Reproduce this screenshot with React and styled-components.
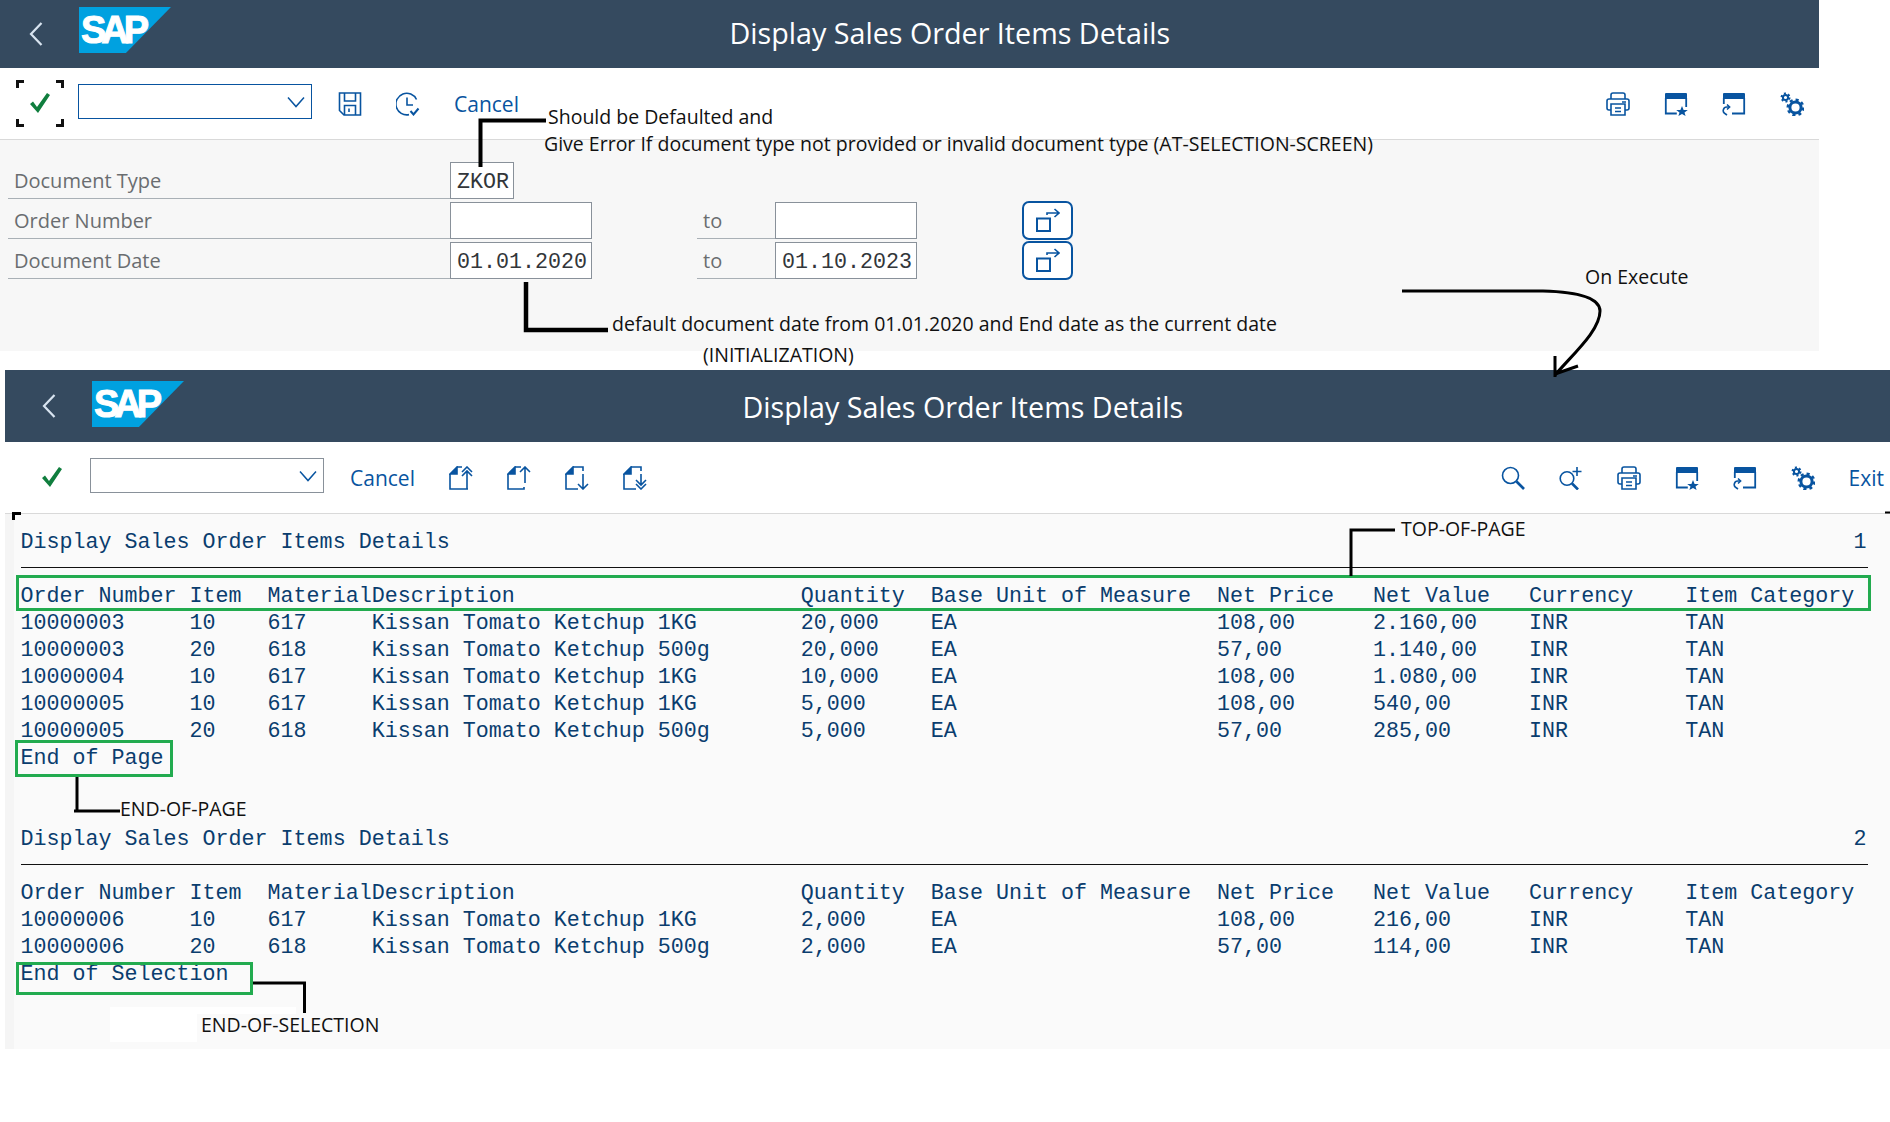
import React from 'react';
import styled, { createGlobalStyle } from 'styled-components';

const GlobalStyle = createGlobalStyle`
  html, body {
    margin: 0;
    padding: 0;
    background: #fff;
    font-family: "Open Sans", "Noto Sans", sans-serif;
  }
`;

const BLUE = '#0854a0';
const MONO = '"Liberation Mono", monospace';

const Page = styled.div`
  position: relative;
  width: 1890px;
  height: 1122px;
  overflow: hidden;
  background: #fff;
`;

const Screen = styled.section`
  width: ${(p) => p.$width}px;
  margin: ${(p) => p.$margin};
  display: flex;
  flex-direction: column;
`;

const ShellBar = styled.header`
  height: ${(p) => p.$height}px;
  background: #354a5f;
  display: flex;
  align-items: center;
  padding-left: ${(p) => p.$inset}px;
`;

const Logo = styled.div`
  align-self: flex-start;
  margin: ${(p) => p.$top}px 0 0 36px;
  width: 92px;
  height: 46px;
  background: #00a1e0;
  clip-path: polygon(0 0, 100% 0, 51% 100%, 0 100%);
  color: #fff;
  font: 700 38px/46px "Liberation Sans", sans-serif;
  letter-spacing: -5px;
  -webkit-text-stroke: 1px #fff;
  padding-left: 2px;
  box-sizing: border-box;
`;

const Title = styled.h1`
  margin: 0 0 ${(p) => p.$lift}px 558.5px;
  color: #fff;
  font-size: 28.7px;
  font-weight: 400;
  white-space: nowrap;
`;

const Toolbar = styled.div`
  height: 71px;
  border-bottom: 1px solid #d9d9d9;
  background: #fff;
  display: flex;
  align-items: center;
  padding: 0 ${(p) => p.$right}px 0 ${(p) => p.$left}px;
`;

const Dropdown = styled.div`
  width: 234px;
  height: 35px;
  margin: -4px 0 0 14px;
  box-sizing: border-box;
  background: #fff;
  border: 1.5px solid ${(p) => (p.$active ? BLUE : '#89919a')};
  display: flex;
  align-items: center;
  justify-content: flex-end;
  padding-right: 6px;
`;

const IconButton = styled.div`
  width: 58px;
  height: 36px;
  display: flex;
  align-items: center;
  justify-content: center;
  flex: none;
`;

const IconGroup = styled.div`
  display: flex;
  align-items: center;
  margin: 0 ${(p) => p.$after || 0}px 0 ${(p) => p.$before || 0}px;
`;

const TextAction = styled.span`
  margin-left: ${(p) => p.$gap}px;
  color: ${BLUE};
  font-size: 21px;
  white-space: nowrap;
`;

const Spacer = styled.div`
  flex: 1;
`;

const FormArea = styled.div`
  height: 211px;
  box-sizing: border-box;
  background: #f7f7f7;
  padding: 22px 0 0 8px;
  display: flex;
  flex-direction: column;
  gap: 3.5px;
`;

const FormRow = styled.div`
  display: flex;
  align-items: stretch;
  height: 36.5px;
`;

const Label = styled.div`
  width: ${(p) => p.$width}px;
  margin-left: ${(p) => p.$gap || 0}px;
  padding: 2px 0 0 ${(p) => p.$inset}px;
  box-sizing: border-box;
  border-bottom: 1px solid #a9b0b6;
  display: flex;
  align-items: center;
  color: #6a6d70;
  font-size: 20px;
`;

const Field = styled.div`
  width: ${(p) => p.$width}px;
  box-sizing: border-box;
  background: #fff;
  border: 1px solid #89919a;
  padding: 5px 0 0 6px;
  display: flex;
  align-items: center;
  color: #32363a;
  font: 21.68px ${MONO};
`;

const RangeButton = styled.div`
  width: 51px;
  height: 38.5px;
  margin: -1px 0 0 105px;
  box-sizing: border-box;
  background: #fff;
  border: 2px solid ${BLUE};
  border-radius: 7px;
  display: flex;
  align-items: center;
  justify-content: center;
`;

const ListArea = styled.div`
  height: 535px;
  box-sizing: border-box;
  background: #fafafa;
  border-left: 9px solid #f5f5f5;
  padding: 14.5px 0 0 6.5px;
`;

const ListLine = styled.div`
  height: 27px;
  color: #0a3d6e;
  font: 21.68px/27px ${MONO};
  white-space: pre;
`;

const ListTitle = styled(ListLine)`
  width: 1846px;
  display: flex;
  justify-content: space-between;
`;

const ListRule = styled.div`
  height: 27px;
  width: 1847px;
  box-sizing: border-box;
  padding-top: 11px;
  &::before {
    content: '';
    display: block;
    height: 1px;
    background: #111;
  }
`;

/* everything below lies over the screenshots: the hand-made annotations */
const Note = styled.span`
  position: absolute;
  left: ${(p) => p.$x}px;
  top: ${(p) => p.$y - 1}px;
  transform: translateY(-50%);
  color: #111;
  font-size: 19.5px;
  white-space: nowrap;
`;

const GreenBox = styled.div`
  position: absolute;
  left: ${(p) => p.$x}px;
  top: ${(p) => p.$y}px;
  width: ${(p) => p.$w}px;
  height: ${(p) => p.$h}px;
  box-sizing: border-box;
  border: 3px solid #22ab4f;
`;

const Patch = styled.div`
  position: absolute;
  left: ${(p) => p.$x}px;
  top: ${(p) => p.$y}px;
  width: ${(p) => p.$w}px;
  height: ${(p) => p.$h}px;
  background: #fff;
`;

const Strokes = styled.svg`
  position: absolute;
  left: 0;
  top: 0;
  pointer-events: none;
`;

const Icon = ({ children, w = 24, h = 24, sw = 1.6 }) => (
  <svg width={w} height={h} viewBox={`0 0 ${w} ${h}`} fill="none" stroke={BLUE} strokeWidth={sw}>
    {children}
  </svg>
);

const BackIcon = () => (
  <svg width="14" height="24" viewBox="0 0 14 24" fill="none" stroke="#d8e4f0" strokeWidth="2.2">
    <path d="M12.5 1L2 12l10.5 11" />
  </svg>
);

const CheckIcon = ({ focus }) => (
  <svg width="48" height="47" viewBox="0 0 48 47" style={{ flex: 'none' }}>
    {focus && (
      <path
        d="M1.5 8V1.5H8M40 1.5h6.5V8M1.5 39v6.5H8M40 45.5h6.5V39"
        fill="none"
        stroke="#111"
        strokeWidth="3"
      />
    )}
    <polygon points="14,24 17,21.5 21,27 31,13 34,15 22,33" fill="#107e3e" />
  </svg>
);

const Chevron = () => (
  <svg width="18" height="12" viewBox="0 0 18 12" fill="none" stroke={BLUE} strokeWidth="1.5">
    <path d="M1 1.5l8 9 8-9" />
  </svg>
);

const SaveIcon = () => (
  <Icon>
    <path d="M1.5 1h21v22H6l-4.5-4.5z" />
    <path d="M6.5 1v8h11V1M6.5 23v-9.5h11V23M11 16.5v3.5" />
  </Icon>
);

const ClockIcon = () => (
  <Icon>
    <path d="M20.5 7.5A10.8 10.8 0 1 0 13 22.6" />
    <path d="M11 5.5v7.5h6" />
    <path d="M14.5 19l3 3.5 5-6" strokeWidth="2" />
  </Icon>
);

const PageUpAll = () => (
  <Icon>
    <path d="M1 8l7-7v7z" fill={BLUE} />
    <path d="M8 1h5M1 8v15h18M18 5v18M13 10l5-5 5 5M13 6l5-5 5 5" />
  </Icon>
);

const PageUp = () => (
  <Icon>
    <path d="M1 8l7-7v7z" fill={BLUE} />
    <path d="M8 1h6M1 8v15h16v-2M18 1v16M13 6l5-5 5 5" />
  </Icon>
);

const PageDown = () => (
  <Icon>
    <path d="M1 8l7-7v7z" fill={BLUE} />
    <path d="M8 1h10v4M1 8v15h12M18 8v15M13 18l5 5 5-5" />
  </Icon>
);

const PageDownAll = () => (
  <Icon>
    <path d="M1 8l7-7v7z" fill={BLUE} />
    <path d="M8 1h10v4M1 8v15h12M18 8v11M13 14l5 5 5-5M13 18l5 5 5-5" />
  </Icon>
);

const SearchIcon = () => (
  <Icon>
    <circle cx="9.5" cy="9.5" r="8" />
    <path d="M15.5 15.5L23 23" strokeWidth="2.6" />
  </Icon>
);

const ZoomPlusIcon = () => (
  <Icon>
    <circle cx="8" cy="12.5" r="6.8" />
    <path d="M13 17.5l6 6" strokeWidth="2.6" />
    <path d="M18 1v9M13.5 5.5h9" />
  </Icon>
);

const PrinterIcon = () => (
  <Icon>
    <path d="M5 18H3a2 2 0 0 1-2-2V9a2 2 0 0 1 2-2h18a2 2 0 0 1 2 2v7a2 2 0 0 1-2 2h-2" />
    <path d="M5 7V3a2 2 0 0 1 2-2h10a2 2 0 0 1 2 2v4" />
    <path d="M5 12h14v11H5zM9 16h6M9 19.5h6M16 10h4" />
  </Icon>
);

const WindowStarIcon = () => (
  <Icon>
    <path d="M1 2a1 1 0 0 1 1-1h20a1 1 0 0 1 1 1v5H1z" fill={BLUE} stroke="none" />
    <path d="M1.8 6v15.5h11M22.2 6v9" strokeWidth="1.8" />
    <polygon points="18,14 19.6,18 23.8,18 20.5,20.6 21.6,24 18,22 14.4,24 15.5,20.6 12.2,18 16.4,18" fill={BLUE} stroke="none" />
  </Icon>
);

const WindowBackIcon = () => (
  <Icon>
    <path d="M1 2a1 1 0 0 1 1-1h20a1 1 0 0 1 1 1v5H1z" fill={BLUE} stroke="none" />
    <path d="M22.2 6v15.5H10M1.8 6v6" strokeWidth="1.8" />
    <path d="M7 15H5a3.6 3.6 0 0 0-1.8 6.8L5 23" />
    <path d="M5 12.5l2.6 2.5L5 17.5" />
  </Icon>
);

const GearsIcon = () => (
  <Icon>
    <circle cx="15.5" cy="15.5" r="5.6" strokeWidth="3" />
    <circle cx="15.5" cy="15.5" r="7.8" strokeWidth="2.4" strokeDasharray="3.1 3" />
    <circle cx="5.5" cy="5.5" r="2.6" strokeWidth="2" />
    <circle cx="5.5" cy="5.5" r="4" strokeWidth="2" strokeDasharray="2 2.2" />
  </Icon>
);

const RangeIcon = () => (
  <svg width="24" height="24" viewBox="0 0 24 24" fill="none" stroke={BLUE} strokeWidth="1.6">
    <rect x="1" y="10.5" width="13" height="12.5" strokeWidth="2" />
    <path d="M11 7V5h12M18.5 1l4.5 4-4.5 4" />
  </svg>
);

const RIGHT_ICONS = [PrinterIcon, WindowStarIcon, WindowBackIcon, GearsIcon];
const PAGE_ICONS = [PageUpAll, PageUp, PageDown, PageDownAll];

const COLUMNS = [13, 6, 8, 33, 10, 22, 12, 12, 12, 0];
const toLine = (cells) => cells.map((cell, i) => cell.padEnd(COLUMNS[i])).join('');

const HEADER = toLine([
  'Order Number',
  'Item',
  'Material',
  'Description',
  'Quantity',
  'Base Unit of Measure',
  'Net Price',
  'Net Value',
  'Currency',
  'Item Category',
]);

const KETCHUP_1KG = 'Kissan Tomato Ketchup 1KG';
const KETCHUP_500 = 'Kissan Tomato Ketchup 500g';

const item = (order, pos, material, desc, qty, price, value) =>
  toLine([order, pos, material, desc, qty, 'EA', price, value, 'INR', 'TAN']);

const PAGE_ONE = [
  item('10000003', '10', '617', KETCHUP_1KG, '20,000', '108,00', '2.160,00'),
  item('10000003', '20', '618', KETCHUP_500, '20,000', '57,00', '1.140,00'),
  item('10000004', '10', '617', KETCHUP_1KG, '10,000', '108,00', '1.080,00'),
  item('10000005', '10', '617', KETCHUP_1KG, '5,000', '108,00', '540,00'),
  item('10000005', '20', '618', KETCHUP_500, '5,000', '57,00', '285,00'),
];

const PAGE_TWO = [
  item('10000006', '10', '617', KETCHUP_1KG, '2,000', '108,00', '216,00'),
  item('10000006', '20', '618', KETCHUP_500, '2,000', '57,00', '114,00'),
];

const Shell = ({ height, inset, logoTop, lift }) => (
  <ShellBar $height={height} $inset={inset}>
    <BackIcon />
    <Logo $top={logoTop}>SAP</Logo>
    <Title $lift={lift}>Display Sales Order Items Details</Title>
  </ShellBar>
);

const ListPage = ({ page, rows, footer }) => (
  <>
    <ListTitle>
      <span>Display Sales Order Items Details</span>
      <span>{page}</span>
    </ListTitle>
    <ListRule />
    <ListLine>{HEADER}</ListLine>
    {rows.map((row, i) => (
      <ListLine key={i}>{row}</ListLine>
    ))}
    <ListLine>{footer}</ListLine>
  </>
);

export default function App() {
  return (
    <Page>
      <GlobalStyle />

      <Screen $width={1819} $margin="0">
        <Shell height={68} inset={29} logoTop={7} lift={4} />
        <Toolbar $left={16} $right={0}>
          <CheckIcon focus />
          <Dropdown $active>
            <Chevron />
          </Dropdown>
          <IconGroup $before={9}>
            <IconButton>
              <SaveIcon />
            </IconButton>
            <IconButton>
              <ClockIcon />
            </IconButton>
          </IconGroup>
          <TextAction $gap={17}>Cancel</TextAction>
          <Spacer />
          <IconGroup $after={-2}>
            {RIGHT_ICONS.map((Glyph, i) => (
              <IconButton key={i}>
                <Glyph />
              </IconButton>
            ))}
          </IconGroup>
        </Toolbar>
        <FormArea>
          <FormRow>
            <Label $width={442} $inset={6}>Document Type</Label>
            <Field $width={64}>ZKOR</Field>
          </FormRow>
          <FormRow>
            <Label $width={442} $inset={6}>Order Number</Label>
            <Field $width={142} />
            <Label $width={78} $gap={105} $inset={6}>to</Label>
            <Field $width={142} />
            <RangeButton>
              <RangeIcon />
            </RangeButton>
          </FormRow>
          <FormRow>
            <Label $width={442} $inset={6}>Document Date</Label>
            <Field $width={142}>01.01.2020</Field>
            <Label $width={78} $gap={105} $inset={6}>to</Label>
            <Field $width={142}>01.10.2023</Field>
            <RangeButton>
              <RangeIcon />
            </RangeButton>
          </FormRow>
        </FormArea>
      </Screen>

      <Screen $width={1885} $margin="19px 0 0 5px">
        <Shell height={72} inset={37} logoTop={11} lift={0} />
        <Toolbar $left={23} $right={6}>
          <CheckIcon />
          <Dropdown>
            <Chevron />
          </Dropdown>
          <TextAction $gap={26}>Cancel</TextAction>
          <IconGroup $before={17}>
            {PAGE_ICONS.map((Glyph, i) => (
              <IconButton key={i}>
                <Glyph />
              </IconButton>
            ))}
          </IconGroup>
          <Spacer />
          <IconGroup>
            <IconButton>
              <SearchIcon />
            </IconButton>
            <IconButton>
              <ZoomPlusIcon />
            </IconButton>
            {RIGHT_ICONS.map((Glyph, i) => (
              <IconButton key={i}>
                <Glyph />
              </IconButton>
            ))}
          </IconGroup>
          <TextAction $gap={17}>Exit</TextAction>
        </Toolbar>
        <ListArea>
          <ListPage page="1" rows={PAGE_ONE} footer="End of Page" />
          <ListLine />
          <ListLine />
          <ListPage page="2" rows={PAGE_TWO} footer="End of Selection" />
        </ListArea>
      </Screen>

      <Patch $x={110} $y={1007} $w={87} $h={35} />
      <Patch $x={197} $y={1007} $w={99} $h={7} />

      <GreenBox $x={16} $y={575} $w={1855} $h={36} />
      <GreenBox $x={15} $y={740} $w={158} $h={37} />
      <GreenBox $x={16} $y={962} $w={237} $h={33} />

      <Strokes width="1890" height="1122" fill="none" stroke="#000">
        <path d="M480.5 167V120.5H546" strokeWidth="4" />
        <path d="M526 282V330H608" strokeWidth="4.5" />
        <path d="M1402 291H1543C1580 292 1600 298 1600 311C1600 330 1575 352 1555 375" strokeWidth="3" />
        <path d="M1555 356V377M1555 374L1578 366" strokeWidth="3" />
        <path d="M1351 576V530H1395" strokeWidth="3" />
        <path d="M77 777V811M74 811H120" strokeWidth="3" />
        <path d="M253 983H304.5V1013" strokeWidth="3" />
        <path d="M13.5 520V513.5H21" strokeWidth="3" />
        <path d="M1885 512.5H1890" strokeWidth="2" />
      </Strokes>

      <Note $x={548} $y={117}>Should be Defaulted and</Note>
      <Note $x={544} $y={144}>Give Error If document type not provided or invalid document type (AT-SELECTION-SCREEN)</Note>
      <Note $x={612} $y={324}>default document date from 01.01.2020 and End date as the current date</Note>
      <Note $x={703} $y={355}>(INITIALIZATION)</Note>
      <Note $x={1585} $y={277}>On Execute</Note>
      <Note $x={1401} $y={529}>TOP-OF-PAGE</Note>
      <Note $x={120} $y={809}>END-OF-PAGE</Note>
      <Note $x={201} $y={1025}>END-OF-SELECTION</Note>
    </Page>
  );
}
